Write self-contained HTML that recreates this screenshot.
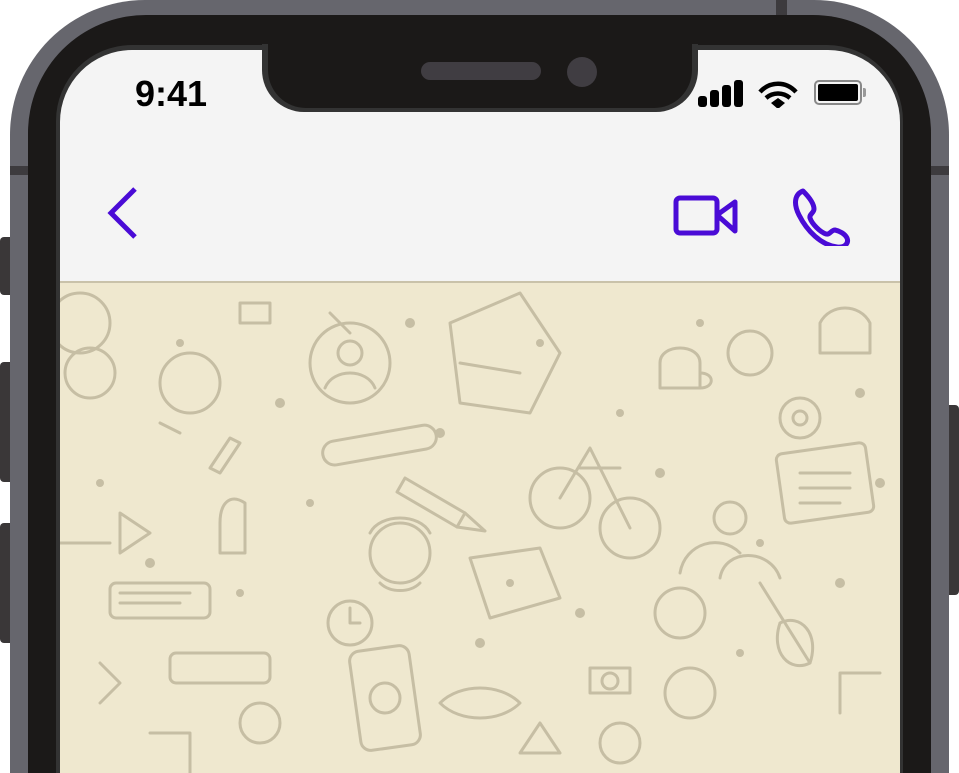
<!DOCTYPE html>
<html><head><meta charset="utf-8"><style>
html,body{margin:0;padding:0;width:959px;height:773px;overflow:hidden;background:#fff;}
.a{position:absolute}
body{font-family:"Liberation Sans",sans-serif;position:relative}
</style></head><body>
<div class="a" style="left:0;top:237px;width:14px;height:58px;background:#3a3738;border-radius:4px"></div>
<div class="a" style="left:0;top:362px;width:14px;height:120px;background:#3a3738;border-radius:4px"></div>
<div class="a" style="left:0;top:523px;width:14px;height:120px;background:#3a3738;border-radius:4px"></div>
<div class="a" style="left:944px;top:405px;width:15px;height:190px;background:#3a3738;border-radius:4px"></div>
<div class="a" style="left:10px;top:0;width:939px;height:773px;background:#66666d;border-radius:135px 135px 0 0"></div>
<div class="a" style="left:10px;top:166px;width:18px;height:9px;background:#3d3b3e"></div>
<div class="a" style="left:931px;top:166px;width:18px;height:9px;background:#3d3b3e"></div>
<div class="a" style="left:776px;top:0;width:11px;height:15px;background:#3d3b3e"></div>
<div class="a" style="left:28px;top:15px;width:903px;height:758px;background:#1b1918;border-radius:118px 118px 0 0"></div>
<div class="a" style="left:56px;top:45px;width:847px;height:728px;background:#333;border-radius:76px 76px 0 0"></div>
<div class="a" style="left:60px;top:50px;width:840px;height:723px;background:#f4f4f4;border-radius:72px 72px 0 0;overflow:hidden">
  <div class="a" style="left:0;top:231px;width:840px;height:492px;background:#efe8cf;border-top:2px solid #c9c2aa">
    <svg width="840" height="490" style="position:absolute;left:0;top:0" fill="none" stroke="#c6bea4" stroke-width="3" stroke-linecap="round" stroke-linejoin="round">
      <circle cx="290" cy="80" r="40"/><circle cx="290" cy="70" r="12"/><path d="M265 105c8-20 42-20 50 0"/>
      <rect x="262" y="150" width="115" height="24" rx="12" transform="rotate(-10 320 162)"/>
      <path d="M345 195l60 35-8 14-60-35z"/><path d="M405 230l20 18-28-4"/>
      <circle cx="340" cy="270" r="30"/><path d="M310 250c10-20 50-20 60 0"/><path d="M320 300c10 10 30 10 40 0"/>
      <path d="M390 40l70-30 40 60-30 60-70-10z"/><path d="M400 80l60 10"/>
      <circle cx="500" cy="215" r="30"/><circle cx="570" cy="245" r="30"/><path d="M500 215l30-50 40 80M520 185h40"/>
      <circle cx="670" cy="235" r="16"/><path d="M620 290c5-30 40-40 60-20M660 295c5-30 50-30 60 0"/>
      <rect x="720" y="165" width="90" height="70" rx="6" transform="rotate(-8 765 200)"/><path d="M740 190h50M740 205h50M740 220h40"/>
      <path d="M600 80c0-20 40-20 40 0v25h-40z"/><path d="M640 90c15 0 15 15 0 15"/>
      <circle cx="690" cy="70" r="22"/><circle cx="740" cy="135" r="20"/><circle cx="740" cy="135" r="7"/>
      <path d="M150 185l20-30 10 5-20 30z"/><path d="M160 240c0-20 10-30 25-20v50h-25z"/><rect x="110" y="370" width="100" height="30" rx="6"/>
      <rect x="50" y="300" width="100" height="35" rx="6"/><path d="M60 310h70M60 320h60"/>
      <rect x="295" y="365" width="60" height="100" rx="10" transform="rotate(-8 325 415)"/><circle cx="325" cy="415" r="15"/>
      <path d="M410 275l70-10 20 50-70 20z"/><path d="M380 420c20-20 60-20 80 0-20 20-60 20-80 0z"/>
      <circle cx="290" cy="340" r="22"/><path d="M290 325v15h10"/>
      <path d="M530 410h40v-25h-40z"/><circle cx="550" cy="398" r="8"/>
      <circle cx="130" cy="100" r="30"/><circle cx="30" cy="90" r="25"/><circle cx="20" cy="40" r="30"/>
      <circle cx="620" cy="330" r="25"/><path d="M700 300l50 80M720 340c20-10 40 10 30 40-20 10-40-10-30-40"/>
      <path d="M180 20h30v20h-30zM270 30l20 20M60 230l30 20-30 20zM0 260h50"/><circle cx="560" cy="460" r="20"/><circle cx="630" cy="410" r="25"/>
      <circle cx="200" cy="440" r="20"/><path d="M100 140l20 10M90 450h40v60"/>
      <path d="M760 40c10-20 40-20 50 0v30h-50zM40 380l20 20-20 20M820 390h-40v40M460 470l20-30 20 30z"/>
    </svg>
    <svg width="840" height="490" style="position:absolute;left:0;top:0" fill="#c6bea4">
      <circle cx="120" cy="60" r="4"/><circle cx="220" cy="120" r="5"/><circle cx="250" cy="220" r="4"/><circle cx="380" cy="150" r="5"/><circle cx="450" cy="300" r="4"/><circle cx="520" cy="330" r="5"/><circle cx="560" cy="130" r="4"/><circle cx="600" cy="190" r="5"/><circle cx="700" cy="260" r="4"/><circle cx="800" cy="110" r="5"/><circle cx="40" cy="200" r="4"/><circle cx="90" cy="280" r="5"/><circle cx="180" cy="310" r="4"/><circle cx="420" cy="360" r="5"/><circle cx="680" cy="370" r="4"/><circle cx="780" cy="300" r="5"/><circle cx="480" cy="60" r="4"/><circle cx="350" cy="40" r="5"/><circle cx="640" cy="40" r="4"/><circle cx="820" cy="200" r="5"/>
    </svg>
  </div>
  <svg class="a" style="left:45px;top:136px" width="34" height="56"><path d="M30 3L6 27l24 24" fill="none" stroke="#4a0bd6" stroke-width="5"/></svg>
  <svg class="a" style="left:613px;top:145px" width="66" height="44" fill="none" stroke="#4a0bd6" stroke-width="5"><rect x="3" y="3" width="41" height="35" rx="4"/><path d="M44 20l18-13v29z" stroke-linejoin="round"/></svg>
  <svg class="a" style="left:733px;top:136px" width="60" height="60" fill="none" stroke="#4a0bd6" stroke-width="5" stroke-linejoin="round"><path d="M10 5c-8 3-10 12-4 24 8 16 22 30 38 32 8 1 12-4 10-9-2-4-7-7-12-8-4 0-5 5-9 4-6-2-14-10-16-16-1-4 4-5 4-9 0-5-5-12-11-18z"/></svg>
</div>
<div class="a" style="left:262px;top:44px;width:436px;height:68px;background:#333;border-radius:0 0 42px 42px"></div>
<div class="a" style="left:268px;top:15px;width:424px;height:93px;background:#1b1918;border-radius:0 0 38px 38px"></div>
<div class="a" style="left:421px;top:62px;width:120px;height:18px;background:#403d42;border-radius:9px"></div>
<div class="a" style="left:567px;top:57px;width:30px;height:30px;background:#403d42;border-radius:50%"></div>
<div class="a" style="left:135px;top:74px;font-size:36px;font-weight:bold;color:#000;line-height:40px">9:41</div>
<div class="a" style="left:698px;top:96px;width:9px;height:11px;background:#000;border-radius:3px"></div>
<div class="a" style="left:710px;top:90px;width:9px;height:17px;background:#000;border-radius:3px"></div>
<div class="a" style="left:722px;top:85px;width:9px;height:22px;background:#000;border-radius:3px"></div>
<div class="a" style="left:734px;top:80px;width:9px;height:27px;background:#000;border-radius:3px"></div>
<svg class="a" style="left:757px;top:78px" width="42" height="30" fill="none" stroke="#000" stroke-width="4.5"><path d="M3 14c10-11 26-11 36 0M9 20c7-6 17-6 24 0"/><path d="M14 25l7-5 7 5-7 6z" fill="#000" stroke="none"/></svg>
<div class="a" style="left:814px;top:80px;width:48px;height:25px;border:2px solid #888;border-radius:5px;box-sizing:border-box"></div>
<div class="a" style="left:818px;top:84px;width:40px;height:17px;background:#000;border-radius:2px"></div>
<div class="a" style="left:863px;top:88px;width:3px;height:9px;background:#999;border-radius:0 2px 2px 0"></div>
</body></html>
